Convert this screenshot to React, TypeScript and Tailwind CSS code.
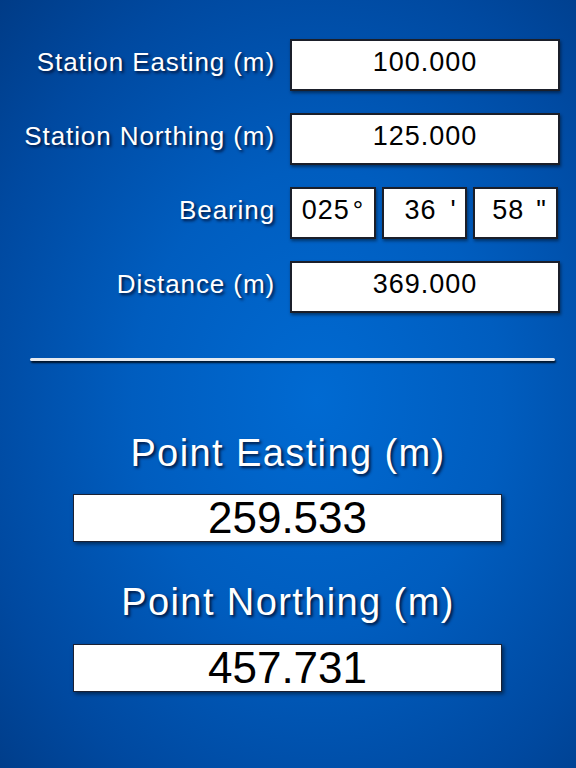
import React from 'react';

const labelShadow = '[text-shadow:2px_2px_3px_rgba(0,10,40,0.85)]';

type Row = { label: string; value?: string };

const stationRows: Row[] = [
  { label: 'Station Easting (m)', value: '100.000' },
  { label: 'Station Northing (m)', value: '125.000' },
  { label: 'Bearing' },
  { label: 'Distance (m)', value: '369.000' },
];

const InputBox = ({ children, className = '' }: { children: React.ReactNode; className?: string }) => (
  <div
    className={`flex h-[52px] items-center justify-center border-2 border-[#1b1f2a] bg-white pb-[5px] text-[27px] tracking-[1px] text-black shadow-[1px_2px_3px_rgba(0,0,0,0.45)] ${className}`}
  >
    {children}
  </div>
);

const BearingInputs = () => (
  <div className="grid grid-cols-[86px_85px_85px] gap-x-[6px]">
    <InputBox className="text-[24px]">
      <span>025</span>
      <span className="ml-[3px] text-[26px]">°</span>
    </InputBox>
    <InputBox className="pl-[12px] text-[24px]">
      <span>36</span>
      <span className="ml-[14px]">'</span>
    </InputBox>
    <InputBox className="pl-[8px] text-[24px]">
      <span>58</span>
      <span className="ml-[12px]">"</span>
    </InputBox>
  </div>
);

const ResultBox = ({ value }: { value: string }) => (
  <div className="ml-[73px] flex h-[48px] w-[429px] items-center justify-center border border-[#1b2133] bg-white text-[44px] leading-none text-black shadow-[2px_2px_4px_rgba(0,0,0,0.5)]">
    {value}
  </div>
);

const ResultLabel = ({ text }: { text: string }) => (
  <div className={`h-[44px] text-center text-[38px] leading-[44px] tracking-[1.4px] text-white ${labelShadow}`}>
    {text}
  </div>
);

export default function App() {
  return (
    <div
      className="h-[768px] w-[576px] overflow-hidden bg-[radial-gradient(ellipse_80%_75%_at_55%_52%,#006ad2_0%,#005dbf_40%,#0049a0_75%,#003a84_100%)]"
      style={{ fontFamily: '"Liberation Sans", Arial, sans-serif' }}
    >
      <div className="grid grid-cols-[275px_270px] gap-x-[15px] gap-y-[22px] pt-[39px]">
        {stationRows.map((row) => (
          <React.Fragment key={row.label}>
            <div
              className={`flex h-[52px] items-center justify-end pb-[6px] text-[26px] tracking-[0.9px] text-white ${labelShadow}`}
            >
              {row.label}
            </div>
            {row.value ? <InputBox>{row.value}</InputBox> : <BearingInputs />}
          </React.Fragment>
        ))}
      </div>

      <div className="ml-[30px] mt-[45px] h-[3px] w-[525px] rounded-full bg-[#e6eaf0] shadow-[1px_2px_2px_rgba(0,0,0,0.8)]" />

      <div className="mt-[70px]">
        <ResultLabel text="Point Easting (m)" />
        <div className="mt-[19px]">
          <ResultBox value="259.533" />
        </div>
        <div className="mt-[38px]">
          <ResultLabel text="Point Northing (m)" />
        </div>
        <div className="mt-[20px]">
          <ResultBox value="457.731" />
        </div>
      </div>
    </div>
  );
}
